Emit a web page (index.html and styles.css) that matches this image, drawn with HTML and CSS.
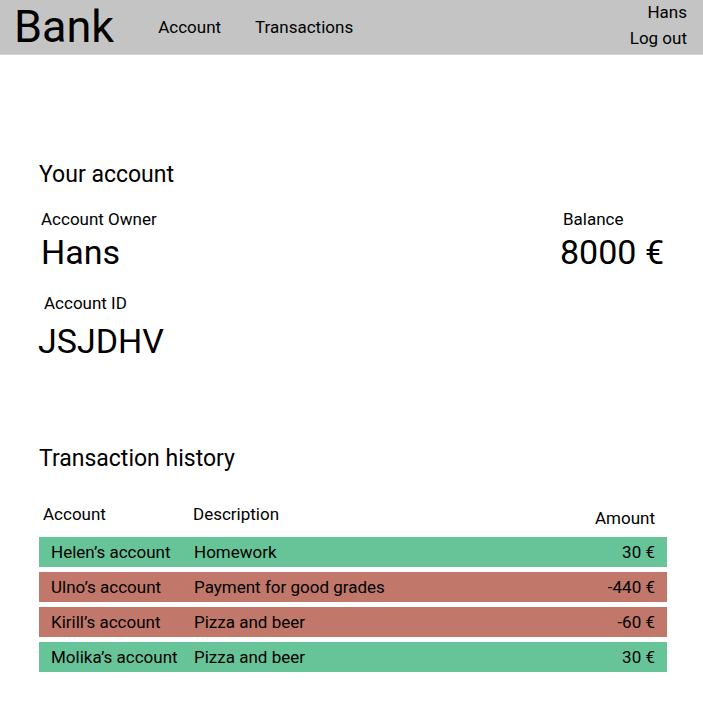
FILE: index.html
```html
<!DOCTYPE html>
<html>
<head>
<meta charset="utf-8">
<link rel="stylesheet" href="styles.css">
</head>
<body>
<header class="topbar">
  <div class="brand">Bank</div>
  <nav class="nav">
    <a class="nav-link">Account</a>
    <a class="nav-link">Transactions</a>
  </nav>
  <div class="user">
    <span>Hans</span>
    <span>Log out</span>
  </div>
</header>
<main class="main">
  <section class="account">
    <h2 class="section-title">Your account</h2>
    <div class="account-grid">
      <div class="field owner">
        <div class="label">Account Owner</div>
        <div class="value">Hans</div>
      </div>
      <div class="field balance">
        <div class="label">Balance</div>
        <div class="value">8000 €</div>
      </div>
      <div class="field acc-id">
        <div class="label">Account ID</div>
        <div class="value big">JSJDHV</div>
      </div>
    </div>
  </section>
  <section class="history">
    <h2 class="section-title">Transaction history</h2>
    <div class="table">
      <div class="thead">
        <div class="th c-acc">Account</div>
        <div class="th c-desc">Description</div>
        <div class="th c-amt">Amount</div>
      </div>
      <div class="row pos"><div class="c-acc">Helen’s account</div><div class="c-desc">Homework</div><div class="c-amt">30 €</div></div>
      <div class="row neg"><div class="c-acc">Ulno’s account</div><div class="c-desc">Payment for good grades</div><div class="c-amt">-440 €</div></div>
      <div class="row neg"><div class="c-acc">Kirill’s account</div><div class="c-desc">Pizza and beer</div><div class="c-amt">-60 €</div></div>
      <div class="row pos"><div class="c-acc">Molika’s account</div><div class="c-desc">Pizza and beer</div><div class="c-amt">30 €</div></div>
    </div>
  </section>
</main>
</body>
</html>
```
FILE: styles.css
```css
* { box-sizing: border-box; }
body {
  margin: 0;
  font-family: Roboto, "Liberation Sans", sans-serif;
  color: #000;
  background: #fff;
}
.topbar {
  height: 55px;
  background: #c4c4c4;
  border-bottom: 1px solid #d6d6d6;
  display: flex;
  align-items: center;
  padding: 0 16px 0 14px;
}
.brand {
  font-size: 45px;
  line-height: 1;
  margin-top: -1px;
}
.nav {
  display: flex;
  gap: 34px;
  margin-left: 44px;
  font-size: 17px;
}
.nav-link { color: #000; }
.user {
  margin-left: auto;
  display: flex;
  flex-direction: column;
  align-items: flex-end;
  font-size: 17px;
  line-height: 26px;
  margin-top: -5px;
}
.main {
  padding: 0 36px 0 39px;
}
.section-title {
  font-weight: 400;
  font-size: 23px;
  margin: 0;
  line-height: 26px;
}
.account {
  padding-top: 107px;
}
.account-grid {
  display: grid;
  grid-template-columns: 1fr auto;
  row-gap: 21px;
  margin-top: 21px;
}
.label {
  font-size: 17px;
  line-height: 20px;
}
.value {
  font-size: 34px;
  line-height: 40px;
  margin-top: 3px;
}
.value.big {
  font-size: 34px;
  line-height: 40px;
  margin-top: 8px;
}
.owner { padding-left: 2px; }
.balance { padding-right: 3px; }
.balance .label { padding-left: 3px; }
.acc-id { grid-column: 1; }
.acc-id .label { padding-left: 5px; }
.acc-id .value { margin-left: -1px; }
.history {
  padding-top: 85px;
}
.table {
  margin-top: 32px;
  width: 628px;
  font-size: 17px;
}
.thead {
  display: flex;
  align-items: flex-start;
  height: 33px;
  padding-right: 12px;
}
.th { line-height: 20px; }
.thead .c-acc { padding-left: 4px; width: 154px; }
.thead .c-desc { padding-left: 0; }
.thead .c-amt { margin-top: 4px; }
.c-acc { width: 155px; }
.c-desc { flex: 1; }
.c-amt { margin-left: auto; text-align: right; }
.row {
  display: flex;
  align-items: center;
  height: 30px;
  padding: 0 12px;
  margin-bottom: 5px;
}
.row .c-acc { width: 143px; }
.pos { background: #67c499; }
.neg { background: #c1786b; }
```
